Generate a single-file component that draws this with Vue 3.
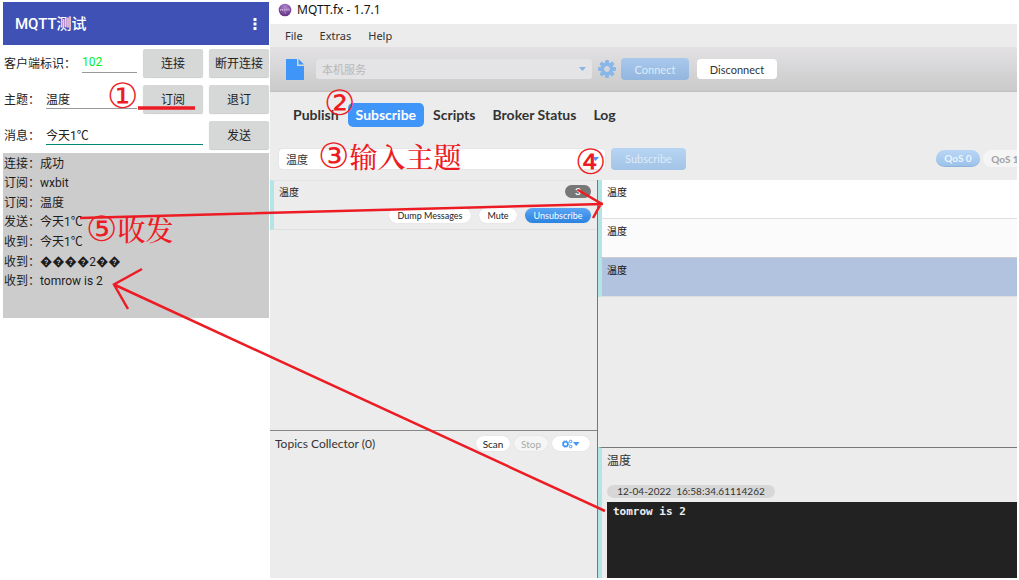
<script setup>
import { ref } from 'vue'

const clientId = ref('102')
const topic = ref('温度')
const message = ref('今天1℃')
const subscribeTopic = ref('温度')
const profile = ref('本机服务')

const logs = [
  ['连接：', '成功'],
  ['订阅：', 'wxbit'],
  ['订阅：', '温度'],
  ['发送：', '今天1℃'],
  ['收到：', '今天1℃'],
  ['收到：', '\uFFFD\uFFFD\uFFFD\uFFFD2\uFFFD\uFFFD'],
  ['收到：', 'tomrow is 2'],
]
const menus = ['File', 'Extras', 'Help']
const tabs = ['Publish', 'Subscribe', 'Scripts', 'Broker Status', 'Log']
const activeTab = ref('Subscribe')
const messages = ['温度', '温度', '温度']
const selected = ref(2)
const teeth = [0, 45, 90, 135, 180, 225, 270, 315]
</script>

<template>
  <div class="page">
    <section class="phone">
      <header class="appbar">
        <h1>MQTT测试</h1>
        <button class="more" aria-label="更多">
          <svg width="4" height="14" viewBox="0 0 4 14"><path d="M.5 1h3v3h-3zM.5 5.500h3v3h-3zM.5 10h3v3h-3z" fill="#fff" /></svg>
        </button>
      </header>
      <form class="form" @submit.prevent>
        <div class="row">
          <label for="cid">客户端标识：</label>
          <input id="cid" v-model="clientId" class="green" type="text" />
          <button type="button">连接</button>
          <button type="button">断开连接</button>
        </div>
        <div class="row">
          <label for="topic" class="short">主题：</label>
          <input id="topic" v-model="topic" type="text" />
          <button type="button">订阅</button>
          <button type="button">退订</button>
        </div>
        <div class="row">
          <label for="msg" class="short">消息：</label>
          <input id="msg" v-model="message" class="focused" type="text" />
          <button type="button">发送</button>
        </div>
      </form>
      <div class="log">
        <p v-for="(l, i) in logs" :key="i"><span>{{ l[0] }}</span><span>{{ l[1] }}</span></p>
      </div>
    </section>

    <section class="desktop">
      <header class="titlebar">
        <svg width="14" height="14" viewBox="0 0 14 14">
          <defs>
            <radialGradient id="orb" cx=".5" cy=".25" r=".8">
              <stop offset="0" stop-color="#b183cc" />
              <stop offset="1" stop-color="#5a2a7c" />
            </radialGradient>
          </defs>
          <circle cx="7" cy="7" r="6.300" fill="url(#orb)" />
          <path d="M2.500 8V6l1 1 1-1v2M6 6.200h1.200v1.500H6zM8 6h1.800M8.900 6v2M10.200 6h1.600M11 6v2M6.500 10h1.500" stroke="#dcc4ea" stroke-width=".6" fill="none" />
        </svg>
        <span>MQTT.fx - 1.7.1</span>
      </header>
      <nav class="menubar">
        <button v-for="m in menus" :key="m">{{ m }}</button>
      </nav>
      <div class="toolbar">
        <button class="file" aria-label="New profile">
          <svg width="18" height="21" viewBox="0 0 18 21"><path d="M0 0h11v7h7v14H0z" fill="#3f96f8" /><path d="M12.500 0 18 5.500h-5.500z" fill="#3f96f8" /></svg>
        </button>
        <div class="profile">
          <select v-model="profile" disabled aria-label="Profile"><option>本机服务</option></select>
          <svg class="caret" width="7" height="4" viewBox="0 0 7 4"><path d="M0 0h7L3.500 4z" fill="#86b4e8" /></svg>
        </div>
        <button class="gear" aria-label="Settings">
          <svg width="18" height="18" viewBox="-9 -9 18 18">
            <rect v-for="a in teeth" :key="a" x="-2" y="-9" width="4" height="5" rx="1" fill="#8ab7ea" :transform="`rotate(${a})`" />
            <circle r="4.700" fill="none" stroke="#8ab7ea" stroke-width="3.600" />
          </svg>
        </button>
        <button class="connect" disabled>Connect</button>
        <button class="disconnect">Disconnect</button>
      </div>
      <nav class="tabs">
        <button v-for="t in tabs" :key="t" :class="{ active: t === activeTab }" @click="activeTab = t">{{ t }}</button>
      </nav>
      <div class="subbar">
        <div class="combo">
          <input v-model="subscribeTopic" type="text" aria-label="Topic" />
          <svg class="caret" width="7" height="4" viewBox="0 0 7 4"><path d="M0 0h7L3.500 4z" fill="#3f96f8" /></svg>
        </div>
        <button class="connect sub" disabled>Subscribe</button>
        <div class="qos">
          <button class="on" disabled>QoS 0</button>
          <button disabled>QoS 1</button>
        </div>
      </div>

      <div class="panes">
        <div class="left">
          <div class="subs">
            <article class="subscription">
              <div class="line"><span>温度</span><span class="badge">3</span></div>
              <div class="actions">
                <button class="pill dump">Dump Messages</button>
                <button class="pill mute">Mute</button>
                <button class="pill blue">Unsubscribe</button>
              </div>
            </article>
          </div>
          <div class="collector">
            <h2>Topics Collector (0)</h2>
            <button class="pill scan">Scan</button>
            <button class="pill stop" disabled>Stop</button>
            <button class="pill cogs" aria-label="Collector options">
              <svg width="18" height="10" viewBox="0 0 18 10">
                <circle cx="3.500" cy="5" r="2.300" fill="none" stroke="#3f96f8" stroke-width="1.600" />
                <circle cx="3.500" cy="5" r="3.300" fill="none" stroke="#3f96f8" stroke-width="1" stroke-dasharray="1.300 1.290" />
                <circle cx="8.700" cy="2.500" r="1.300" fill="none" stroke="#3f96f8" />
                <circle cx="8.700" cy="7.500" r="1.300" fill="none" stroke="#3f96f8" />
                <path d="M11 3h6.500L14.250 7z" fill="#3f96f8" />
              </svg>
            </button>
          </div>
        </div>
        <div class="right">
          <ul class="messages">
            <li v-for="(m, i) in messages" :key="i" :class="{ selected: i === selected }" @click="selected = i">{{ m }}</li>
          </ul>
          <div class="detail">
            <h2>温度</h2>
            <time>12-04-2022&nbsp; 16:58:34.61114262</time>
            <pre>tomrow is 2</pre>
          </div>
        </div>
      </div>
    </section>

    <div class="notes">
      <svg width="1019" height="580" viewBox="0 0 1019 580" fill="none" stroke="#ed1c24" stroke-width="2.500">
        <path d="M138 108H195" stroke-width="3.500" />
        <path d="M80 218 603 204M578 190 601 203.500 593 218" />
        <path d="M605 511 114 284.500M142 269 114 284.500 128 309" />
      </svg>
      <span class="n n1">①</span>
      <span class="n n2">②</span>
      <span class="n n3">③<b>输入主题</b></span>
      <span class="n n4">④</span>
      <span class="n n5">⑤<b>收发</b></span>
    </div>
  </div>
</template>

<style>
body { margin: 0; background: #fff; }
</style>

<style scoped>
.page {
  position: relative;
  display: flex;
  align-items: flex-start;
  min-height: 100vh;
  box-sizing: border-box;
  padding: 0 2px 2px 3px;
  overflow: hidden;
  font-family: Lato, "Noto Sans CJK SC", sans-serif;
  color: #333;
}
.page * { box-sizing: border-box; }
button, input, select { font: inherit; color: inherit; border: 0; padding: 0; margin: 0; background: none; border-radius: 0; outline: 0; min-width: 0; }
h1, h2, p, ul, pre { margin: 0; padding: 0; font-weight: 400; list-style: none; }
svg { display: block; }

.phone {
  flex: 0 0 266px;
  margin: 2px 1px 0 0;
  font: 12px/16px Roboto, "Noto Sans CJK SC", sans-serif;
  color: #222;
}
.appbar { display: flex; align-items: center; justify-content: space-between; height: 43px; padding: 0 12px; background: #3f51b5; color: #fff; }
.appbar h1 { font-size: 15px; font-weight: 500; }
.form { display: grid; gap: 8px; padding: 4px 0; }
.row { display: flex; align-items: center; gap: 6px; height: 28px; }
.row label { flex: 0 0 70px; padding: 2px 0 0 1px; white-space: nowrap; }
.row label.short { flex-basis: 35px; }
.row input { flex: 1; width: 0; height: 20px; padding-bottom: 1px; border-bottom: 1px solid #999; }
.row input.green { color: #00f028; }
.row input.focused { border-color: #00897b; }
.row button { flex: 0 0 60px; height: 28px; padding-top: 2px; background: #d6d7d7; border-radius: 2px; box-shadow: 0 1px 1px #ccc; }
.log { height: 165px; padding: 1px 1px 27px; background: #ccc; display: grid; grid-auto-rows: 1fr; align-items: center; }
.log p { display: flex; color: #1c1c1c; }
.log p span:first-child { flex: 0 0 36px; }

.desktop { flex: 1; min-width: 0; display: flex; flex-direction: column; min-height: calc(100vh - 2px); background: #ececec; }
.titlebar { display: flex; align-items: center; gap: 5px; height: 24px; padding: 0 8px 5px; background: #fff; font: 12px/16px "Noto Sans", sans-serif; color: #111; }
.menubar { display: flex; align-items: center; gap: 17px; height: 23px; padding: 1px 15px 0; font: 11px/16px "Noto Sans", sans-serif; }
.toolbar { display: flex; align-items: center; height: 45px; padding: 0 16px; background: linear-gradient(#e3e1e4, #cacaca); border-bottom: 1px solid #c0c0c0; font-size: 11px; }
.profile { position: relative; width: 276px; height: 20px; margin: 0 6px 0 12px; background: #e4e3e5; border-radius: 3px; }
.profile select { width: 100%; height: 20px; padding-left: 6px; appearance: none; color: #b8b8b8; opacity: 1; font-size: 11px; }
.caret { position: absolute; right: 6px; top: 8px; pointer-events: none; }
.connect { width: 68px; height: 22px; border-radius: 4px; margin-left: 5px; color: #dfeaf6; background: linear-gradient(#aac8ec, #92b6df); }
.disconnect { width: 80px; height: 20px; border-radius: 4px; margin-left: 8px; background: #fff; }
.tabs { display: flex; align-items: center; gap: 1px; height: 45px; padding: 0 15px; font-size: 14px; line-height: 24px; font-weight: 700; }
.tabs button { height: 24px; padding: 0 8px; border-radius: 5px; }
.tabs button.active { color: #fff; background: #3f96f8; }
.subbar { display: flex; align-items: center; height: 43px; padding: 0 0 0 9px; overflow: hidden; font-size: 11px; }
.combo { position: relative; flex: 0 0 326px; height: 20px; background: #fff; border-radius: 3px; box-shadow: 0 0 1px #bbb; }
.combo input { width: 100%; height: 20px; padding: 0 18px 0 7px; }
.sub { flex: 0 0 75px; margin-left: 6px; background: linear-gradient(#b7d4f3, #a3c4e8); }
.qos { display: flex; gap: 3px; flex: 0 0 81px; margin-left: auto; overflow: hidden; font-size: 10px; font-weight: 700; color: #a0a0a0; }
.qos button { flex: 0 0 44px; height: 17px; border-radius: 9px; background: #f5f5f5; }
.qos button.on { color: #edf5fd; background: linear-gradient(#b9d7f5, #9cc2eb); border-bottom: 1px solid #8fb2d8; }

.panes { flex: 1; display: grid; grid-template-columns: 328px 1fr; }
.left { display: grid; grid-template-rows: 250fr 148fr; border-right: 1px solid #777; }
.subscription { height: 50px; border-left: 4px solid #b2e5e5; border-bottom: 1px solid #e0e0e0; border-top: 1px solid #e4e4e4; padding: 3px 6px 0 5px; font-size: 10px; }
.line { display: flex; justify-content: space-between; align-items: center; height: 14px; color: #222; }
.badge { width: 26px; line-height: 13px; border-radius: 7px; background: #777; color: #fff; text-align: center; font-weight: 700; }
.actions { display: flex; justify-content: flex-end; gap: 8px; padding: 10px 0 0; }
.pill { height: 15px; border-radius: 8px; background: #fff; color: #222; font-size: 10px; line-height: 14px; box-shadow: 0 0 1px #ccc; }
.actions .pill { font-size: 9px; }
.dump { width: 82px; }
.mute { width: 38px; }
.pill.blue { width: 66px; color: #fff; background: linear-gradient(#5aa5f5, #2b83df); }
.collector { display: flex; align-items: flex-start; gap: 4px; padding: 5px 7px 0 5px; border-top: 1px solid #888; }
.collector h2 { flex: 1; font-size: 12px; line-height: 16px; }
.scan, .stop { width: 34px; }
.pill.stop { color: #aaa; background: #f5f5f5; }
.cogs { width: 38px; display: grid; place-items: center; }
.right { min-width: 0; display: grid; grid-template-rows: 267fr 131fr; }
.messages li { height: 39px; padding: 5px; border-left: 4px solid #b2e5e5; border-bottom: 1px solid #dedede; background: #fff; color: #111; font-size: 10px; line-height: 14px; }
.messages li:nth-child(2) { background: #fbfbfb; border-bottom-color: #ccc; }
.messages li.selected { background: #b2c3df; }
.detail { display: flex; flex-direction: column; align-items: flex-start; border-top: 1px solid #777; border-left: 4px solid #b2e5e5; padding: 5px 0 0 5px; }
.detail h2 { font-size: 12px; line-height: 16px; }
.detail time { width: 168px; margin: 16px 0 4px; border-radius: 7px; background: #d7d7d7; text-align: center; font-size: 10px; line-height: 13px; }
.detail pre { flex: 1; align-self: stretch; padding: 3px 6px; background: #222; color: #eee; font: 700 11px/14px "DejaVu Sans Mono", monospace; }

.notes { position: absolute; left: 0; top: 0; pointer-events: none; }
.n { position: absolute; display: flex; align-items: center; white-space: nowrap; color: #ed1c24; font: 35px/28px "DejaVu Sans", sans-serif; }
.n b { font: 500 28px/28px "Noto Serif CJK SC", "Noto Sans CJK SC", serif; }
.n1 { left: 107px; top: 82px; }
.n2 { left: 324px; top: 89px; }
.n3 { left: 318px; top: 142px; }
.n4 { left: 575px; top: 148px; }
.n5 { left: 86px; top: 215px; }
</style>
